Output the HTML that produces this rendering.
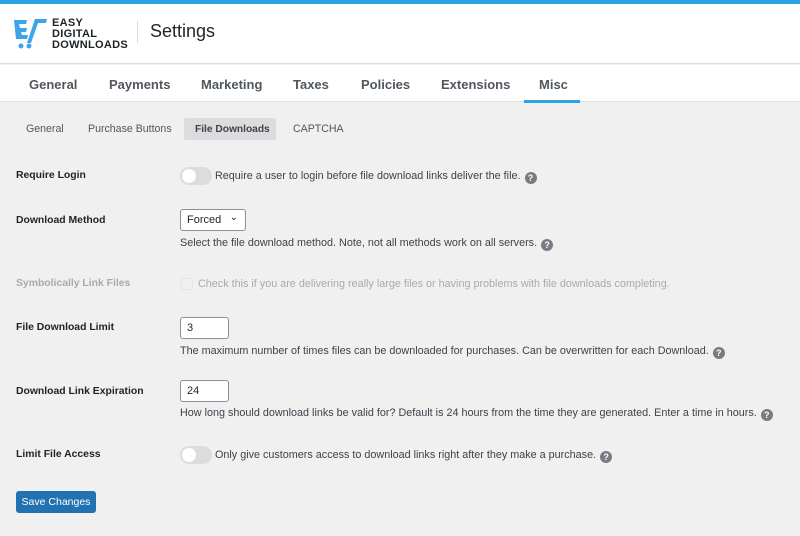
<!DOCTYPE html>
<html><head><style>
*{box-sizing:border-box;margin:0;padding:0}
body{width:800px;height:536px;overflow:hidden;background:#f0f0f1;font-family:"Liberation Sans",sans-serif;color:#1d2327;position:relative}
.a{position:absolute;white-space:nowrap}
.tab{position:absolute;top:77px;font-size:13px;font-weight:bold;color:#50575e}
.st{position:absolute;top:123px;font-size:10.6px;color:#50575e}
.lab{position:absolute;left:16px;font-size:10.4px;font-weight:bold;color:#1d2327}
.d{position:absolute;left:180px;font-size:10.8px;color:#3c434a}
.q{display:inline-block;width:12px;height:12px;border-radius:50%;background:#787c82;color:#fff;font-size:9px;font-weight:bold;text-align:center;line-height:12px;vertical-align:-2px;margin-left:4px}
.tg{position:absolute;left:180px;width:32px;height:18px;border-radius:9px;background:#dcdcde}
.tg:after{content:"";position:absolute;left:2px;top:2px;width:14px;height:14px;border-radius:50%;background:#fff}
.in{position:absolute;left:180px;width:49px;height:22px;background:#fff;border:1px solid #8c8f94;border-radius:3px;font-size:11px;padding:4px 6px}
</style></head><body>
<div class="a" style="left:0;top:0;width:800px;height:4px;background:#2ea2e6"></div>
<div class="a" style="left:0;top:4px;width:800px;height:60px;background:#fff;border-bottom:1px solid #dcdcde"></div>
<svg class="a" style="left:13px;top:17px" width="36" height="32" viewBox="0 0 36 32">
<path d="M1 3h13l-1 4H6l1 4h7l-1 4H8l1 3h6l-1 4H3z" fill="#3ba4eb"/>
<path d="M22 2h12l-1 4h-8l-7 20h-4z" fill="#3ba4eb"/>
<circle cx="8" cy="29" r="2.5" fill="#3ba4eb"/><circle cx="16" cy="29" r="2.5" fill="#3ba4eb"/>
</svg>
<div class="a" style="left:52px;top:18px;font-size:11px;font-weight:bold;letter-spacing:0.3px;line-height:11px;color:#1d2327">EASY<br>DIGITAL<br>DOWNLOADS</div>
<div class="a" style="left:137px;top:21px;width:1px;height:22px;background:#dcdcde"></div>
<div class="a" style="left:150px;top:21px;font-size:18px;color:#1d2327">Settings</div>
<div class="a" style="left:0;top:65px;width:800px;height:37px;background:#fff;border-bottom:1px solid #e0e0e0"></div>
<div class="tab" style="left:29px">General</div>
<div class="tab" style="left:109px">Payments</div>
<div class="tab" style="left:201px">Marketing</div>
<div class="tab" style="left:293px">Taxes</div>
<div class="tab" style="left:361px">Policies</div>
<div class="tab" style="left:441px">Extensions</div>
<div class="tab" style="left:539px">Misc</div>
<div class="a" style="left:524px;top:100px;width:56px;height:3px;background:#2ea2e6"></div>
<div class="st" style="left:26px">General</div>
<div class="st" style="left:88px">Purchase Buttons</div>
<div class="a" style="left:184px;top:118px;width:92px;height:22px;background:#dcdcde;border-radius:2px"></div>
<div class="st" style="left:195px;font-weight:bold;color:#3c434a;font-size:10.2px;top:124px">File Downloads</div>
<div class="st" style="left:293px">CAPTCHA</div>

<div class="lab" style="top:170px">Require Login</div>
<div class="tg" style="top:167px"></div>
<div class="d" style="left:215px;top:170px">Require a user to login before file download links deliver the file.<span class="q">?</span></div>

<div class="lab" style="top:215px">Download Method</div>
<div class="a" style="left:180px;top:209px;width:66px;height:22px;background:#fff;border:1px solid #8c8f94;border-radius:3px;font-size:11px;padding:4px 6px;color:#1d2327">Forced<span style="position:absolute;right:7px;top:2px;font-size:10px">&#8964;</span></div>
<div class="d" style="top:237px">Select the file download method. Note, not all methods work on all servers.<span class="q">?</span></div>

<div class="lab" style="top:278px;color:#a7aaad">Symbolically Link Files</div>
<div class="a" style="left:181px;top:278px;width:12px;height:12px;border:1px solid #e6e6e6;border-radius:2px"></div>
<div class="d" style="left:198px;top:278px;color:#a7aaad">Check this if you are delivering really large files or having problems with file downloads completing.</div>

<div class="lab" style="top:322px">File Download Limit</div>
<div class="in" style="top:317px">3</div>
<div class="d" style="top:345px">The maximum number of times files can be downloaded for purchases. Can be overwritten for each Download.<span class="q">?</span></div>

<div class="lab" style="top:386px">Download Link Expiration</div>
<div class="in" style="top:380px">24</div>
<div class="d" style="top:407px">How long should download links be valid for? Default is 24 hours from the time they are generated. Enter a time in hours.<span class="q">?</span></div>

<div class="lab" style="top:449px">Limit File Access</div>
<div class="tg" style="top:446px"></div>
<div class="d" style="left:215px;top:449px">Only give customers access to download links right after they make a purchase.<span class="q">?</span></div>

<div class="a" style="left:16px;top:491px;width:80px;height:22px;background:#2271b1;border-radius:3px;color:#fff;font-size:10.5px;text-align:center;line-height:22px">Save Changes</div>
</body></html>
